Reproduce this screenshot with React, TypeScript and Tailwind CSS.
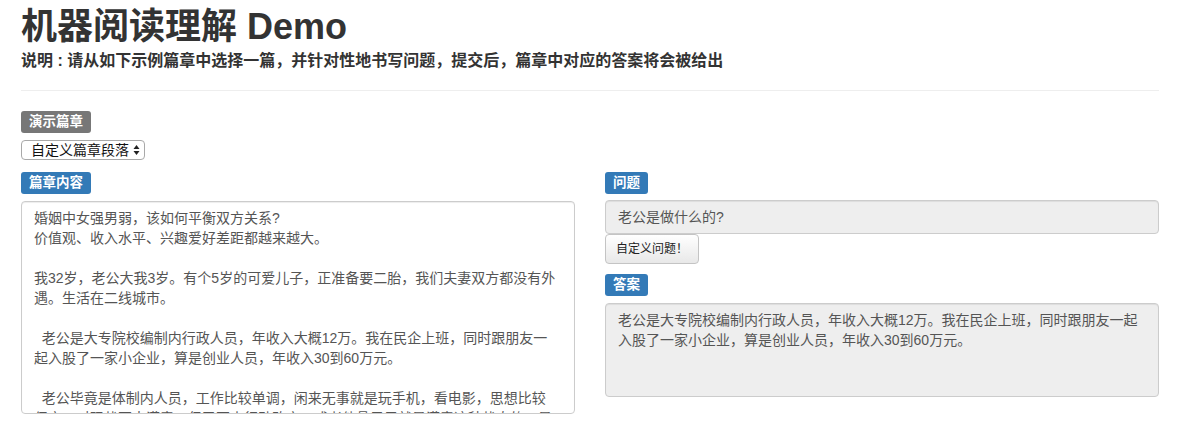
const passage = [
  "婚姻中女强男弱，该如何平衡双方关系?",
  "价值观、收入水平、兴趣爱好差距都越来越大。",
  "",
  "我32岁，老公大我3岁。有个5岁的可爱儿子，正准备要二胎，我们夫妻双方都没有外",
  "遇。生活在二线城市。",
  "",
  "  老公是大专院校编制内行政人员，年收入大概12万。我在民企上班，同时跟朋友一",
  "起入股了一家小企业，算是创业人员，年收入30到60万元。",
  "",
  "  老公毕竟是体制内人员，工作比较单调，闲来无事就是玩手机，看电影，思想比较",
  "保守，对现状不太满意，但又不去行动改变，或者他骨子里就是满意这种状态的，是",
  "个安于现状的人。",
].join("\n")

const answer = [
  "老公是大专院校编制内行政人员，年收入大概12万。我在民企上班，同时跟朋友一起",
  "入股了一家小企业，算是创业人员，年收入30到60万元。",
].join("\n")

const Label = ({ children, tone }: { children: React.ReactNode; tone: "gray" | "blue" }) => (
  <span
    className={
      "inline-flex h-[22px] items-center rounded-[3px] px-[8px] text-[13.5px] font-bold leading-none text-white " +
      (tone === "gray" ? "bg-[#777777]" : "bg-[#337ab7]")
    }
  >
    {children}
  </span>
)

const SelectArrows = () => (
  <svg width="7" height="12" viewBox="0 0 7 12" className="fill-[#222]">
    <path d="M3.5 1 L6.5 5 L0.5 5 Z" />
    <path d="M3.5 11 L6.5 7 L0.5 7 Z" />
  </svg>
)

export default function App() {
  return (
    <div
      className="ml-[21px] w-[1138px] text-[#333333]"
      style={{ fontFamily: '"Liberation Sans", "Noto Sans CJK SC", sans-serif' }}
    >
      <h1 className="pt-[7px] text-[36px] font-bold leading-[40px]">机器阅读理解 Demo</h1>
      <p className="mt-[4px] text-[16px] font-bold leading-[20px]">
        说明 : 请从如下示例篇章中选择一篇，并针对性地书写问题，提交后，篇章中对应的答案将会被给出
      </p>
      <hr className="mt-[19px] border-t border-[#eeeeee]" />

      <div className="mt-[20px] flex">
        <Label tone="gray">演示篇章</Label>
      </div>
      <div className="mt-[7px] flex h-[20px] w-[124px] items-center justify-between rounded-[4px] border border-[#a9a9a9] bg-white pl-[9px] pr-[4px] text-[14px] text-[#111]">
        <span>自定义篇章段落</span>
        <SelectArrows />
      </div>

      <div className="mt-[12px] grid grid-cols-2 gap-[30px]">
        {/* Passage */}
        <div className="flex flex-col">
          <div className="flex">
            <Label tone="blue">篇章内容</Label>
          </div>
          <div className="mt-[7px] h-[213px] overflow-hidden whitespace-pre rounded-[4px] border border-[#cccccc] bg-white px-[12px] py-[6px] text-[14px] leading-[20px] text-[#555555] shadow-[inset_0_1px_1px_rgba(0,0,0,0.075)]">
            {passage}
          </div>
        </div>

        {/* Question + answer */}
        <div className="flex flex-col">
          <div className="flex">
            <Label tone="blue">问题</Label>
          </div>
          <div className="mt-[6px] flex h-[34px] items-center rounded-[4px] border border-[#cccccc] bg-[#eeeeee] px-[12px] text-[14px] text-[#555555] shadow-[inset_0_1px_1px_rgba(0,0,0,0.075)]">
            老公是做什么的?
          </div>
          <div className="flex">
            <button className="h-[30px] rounded-[4px] border border-[#c4c4c4] bg-gradient-to-b from-white to-[#e8e8e8] px-[10px] text-[12px] text-[#222]">
              自定义问题！
            </button>
          </div>
          <div className="mt-[10px] flex">
            <Label tone="blue">答案</Label>
          </div>
          <div className="mt-[7px] h-[94px] whitespace-pre rounded-[4px] border border-[#cccccc] bg-[#eeeeee] px-[12px] py-[6px] text-[14px] leading-[20px] text-[#555555] shadow-[inset_0_1px_1px_rgba(0,0,0,0.075)]">
            {answer}
          </div>
        </div>
      </div>
    </div>
  )
}
